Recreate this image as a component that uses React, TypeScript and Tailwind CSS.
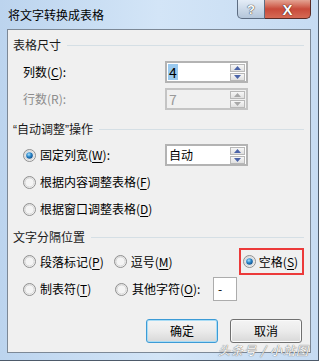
import React from 'react';

const Radio: React.FC<{ checked?: boolean }> = ({ checked }) => (
  <svg width="13" height="13" viewBox="0 0 13 13" className="shrink-0">
    <defs>
      <linearGradient id="rbFill" x1="0" y1="0" x2="1" y2="1">
        <stop offset="0" stopColor="#d9d9d9" />
        <stop offset="1" stopColor="#ffffff" />
      </linearGradient>
      <radialGradient id="rbDot" cx="0.4" cy="0.35" r="0.7">
        <stop offset="0" stopColor="#a9e0fb" />
        <stop offset="0.5" stopColor="#2a86c9" />
        <stop offset="1" stopColor="#0f4a86" />
      </radialGradient>
    </defs>
    <circle cx="6.5" cy="6.5" r="6" fill="url(#rbFill)" stroke="#8f8f8f" />
    <circle cx="6.5" cy="6.5" r="4.5" fill="#f4f4f4" stroke="#d0d0d0" strokeWidth="0.8" />
    {checked && <circle cx="6.5" cy="6.5" r="3.3" fill="url(#rbDot)" />}
  </svg>
);

const Arrow: React.FC<{ up?: boolean; disabled?: boolean }> = ({ up, disabled }) => (
  <svg width="7" height="4" viewBox="0 0 7 4">
    <path d={up ? 'M0 4 L3.5 0 L7 4 Z' : 'M0 0 L7 0 L3.5 4 Z'} fill={disabled ? '#a8a8a8' : '#4b64a8'} />
  </svg>
);

const SpinButtons: React.FC<{ disabled?: boolean }> = ({ disabled }) => (
  <div className="flex flex-col gap-px mr-px">
    <div className="w-[15px] h-[8px] border border-[#b8b8b8] bg-gradient-to-b from-[#f7f7f7] to-[#e0e0e0] flex items-center justify-center">
      <Arrow up disabled={disabled} />
    </div>
    <div className="w-[15px] h-[8px] border border-[#b8b8b8] bg-gradient-to-b from-[#f7f7f7] to-[#e0e0e0] flex items-center justify-center">
      <Arrow disabled={disabled} />
    </div>
  </div>
);

const Header: React.FC<{ children: React.ReactNode; className: string }> = ({ children, className }) => (
  <div className={`flex items-center gap-[6px] ${className}`}>
    <span className="text-[#1a1a1a]">{children}</span>
    <div className="flex-1 h-px bg-[#d5dfe5]" />
  </div>
);

export default function App() {
  return (
    <div className="relative w-[319px] h-[361px] overflow-hidden bg-gradient-to-r from-[#bcd4ee] via-[#d3e5f7] to-[#c6dbf2] border-r border-b border-[#4d5a6a] font-['Noto_Sans_CJK_SC','Noto_Sans',sans-serif] text-[12px] leading-none text-black flex flex-col">
      {/* title bar */}
      <div className="h-[29px] flex justify-between">
        <div className="pl-[8px] pt-[9px] text-[12px] text-black">将文字转换成表格</div>
        <div className="flex mr-[7px]">
          <div className="w-[28px] h-[19px] border border-t-0 border-[#5d6d82] rounded-bl-[5px] bg-gradient-to-b from-[#e4edf7] to-[#b4c6da] flex items-center justify-center text-white font-bold text-[13px] font-['Liberation_Sans',sans-serif] [text-shadow:0_0_1px_#333,0_0_1px_#333]">
            ?
          </div>
          <div className="w-[46px] h-[19px] border border-t-0 border-l-0 border-[#5a2b26] rounded-br-[5px] bg-gradient-to-b from-[#e3a393] via-[#c84a3a] to-[#d56a55] flex items-center justify-center text-white font-black text-[15px] font-['Liberation_Sans',sans-serif] [text-shadow:0_0_1px_#3a1a14,0_0_1px_#3a1a14]">
            X
          </div>
        </div>
      </div>

      {/* client area */}
      <div className="mx-[7px] h-[324px] border border-[#7c8896] bg-[#f0f0f0] flex flex-col pl-[5px] pr-[6px]">
        <Header className="h-[30px]">表格尺寸</Header>

        <div className="h-[24px] flex items-center pl-[10px]">
          <span className="w-[142px]">
            列数(<u className="underline-offset-2">C</u>):
          </span>
          <div className="w-[83px] h-[22px] border-2 border-[#b3b3b3] bg-white flex items-center justify-between">
            <span className="ml-[1px] bg-[#99c9ef] px-px text-[14px] leading-[16px]">4</span>
            <SpinButtons />
          </div>
        </div>

        <div className="mt-[3px] h-[24px] flex items-center pl-[10px]">
          <span className="w-[142px] text-[#8c8c8c]">行数(R):</span>
          <div className="w-[83px] h-[22px] border-2 border-[#c4c4c4] bg-[#f0f0f0] flex items-center justify-between">
            <span className="ml-[2px] text-[14px] leading-[16px] text-[#9a9a9a]">7</span>
            <SpinButtons disabled />
          </div>
        </div>

        <Header className="mt-[7px] h-[22px]">
          <span className="font-['Liberation_Sans',sans-serif]">“</span>自动调整
          <span className="font-['Liberation_Sans',sans-serif]">”</span>操作
        </Header>

        <div className="mt-[3px] h-[24px] flex items-center pl-[10px]">
          <div className="w-[142px] flex items-center gap-[4px]">
            <Radio checked />
            <span>
              固定列宽(<u className="underline-offset-2">W</u>):
            </span>
          </div>
          <div className="w-[83px] h-[22px] border-2 border-[#b3b3b3] bg-white flex items-center justify-between">
            <span className="ml-[2px]">自动</span>
            <SpinButtons />
          </div>
        </div>

        <div className="mt-[3px] h-[24px] flex items-center gap-[4px] pl-[10px]">
          <Radio />
          <span>
            根据内容调整表格(<u className="underline-offset-2">F</u>)
          </span>
        </div>

        <div className="mt-[3px] h-[24px] flex items-center gap-[4px] pl-[10px]">
          <Radio />
          <span>
            根据窗口调整表格(<u className="underline-offset-2">D</u>)
          </span>
        </div>

        <Header className="mt-[5px] h-[22px]">文字分隔位置</Header>

        <div className="h-[27px] flex items-center pl-[10px]">
          <div className="w-[92px] flex items-center gap-[4px]">
            <Radio />
            <span>
              段落标记(<u className="underline-offset-2">P</u>)
            </span>
          </div>
          <div className="w-[127px] flex items-center gap-[4px]">
            <Radio />
            <span>
              逗号(<u className="underline-offset-2">M</u>)
            </span>
          </div>
          <div className="w-[66px] h-[27px] border-2 border-[#ec3a3a] flex items-center gap-[3px] pl-[2px]">
            <Radio checked />
            <span>
              空格(<u className="underline-offset-2">S</u>)
            </span>
          </div>
        </div>

        <div className="mt-[2px] h-[24px] flex items-center pl-[10px]">
          <div className="w-[92px] flex items-center gap-[4px]">
            <Radio />
            <span>
              制表符(<u className="underline-offset-2">T</u>)
            </span>
          </div>
          <div className="w-[98px] flex items-center gap-[4px]">
            <Radio />
            <span>
              其他字符(<u className="underline-offset-2">O</u>):
            </span>
          </div>
          <div className="w-[24px] h-[24px] border border-[#acacac] bg-white flex items-center pl-[4px]">-</div>
        </div>

        <div className="mt-[18px] h-[24px] flex justify-end gap-[12px] pr-[2px]">
          <button className="w-[72px] h-[24px] rounded-[3px] border border-[#3c9bd6] shadow-[inset_0_0_0_1px_#a9dcf5] bg-gradient-to-b from-[#f4f4f4] via-[#ebebeb] to-[#d8d8d8] flex items-center justify-center">
            确定
          </button>
          <button className="w-[72px] h-[24px] rounded-[3px] border border-[#707070] shadow-[inset_0_0_0_1px_#fafafa] bg-gradient-to-b from-[#f4f4f4] via-[#ebebeb] to-[#d8d8d8] flex items-center justify-center">
            取消
          </button>
        </div>
      </div>

      {/* watermark */}
      <div className="absolute right-[9px] bottom-[4px] text-[12px] italic text-white tracking-[1px] [text-shadow:0_0_1px_#6b6b6b,0_0_1px_#6b6b6b]">
        头条号 / 小站图
      </div>
    </div>
  );
}
